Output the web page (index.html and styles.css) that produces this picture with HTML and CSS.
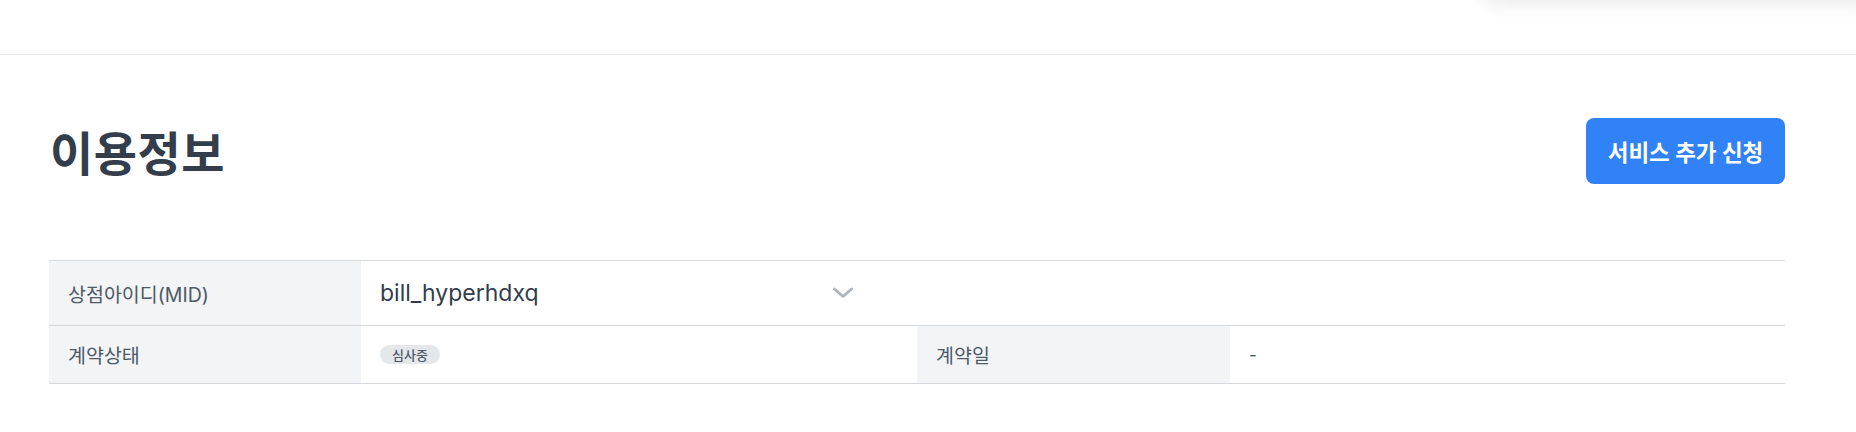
FILE: index.html
```html
<!DOCTYPE html>
<html lang="ko">
<head>
<meta charset="utf-8">
<title>이용정보</title>
<link rel="stylesheet" href="styles.css">
</head>
<body>
<div class="topbar">
  <div class="menu-shadow"></div>
</div>
<main class="content">
  <div class="title-row">
    <h1 class="title">이용정보</h1>
    <button class="btn-primary" type="button">서비스 추가 신청</button>
  </div>
  <div class="info-table">
    <div class="cell label">상점아이디(MID)</div>
    <div class="cell value span3">
      <div class="select">
        <span class="select-text">bill_hyperhdxq</span>
        <svg class="chevron" width="22" height="12" viewBox="0 0 22 12" fill="none"><path d="M2.5 2 L11 9.5 L19.5 2" stroke="#adb5bd" stroke-width="3" stroke-linecap="round" stroke-linejoin="round"/></svg>
      </div>
    </div>
    <div class="cell label short">계약상태</div>
    <div class="cell value short"><span class="badge">심사중</span></div>
    <div class="cell label short">계약일</div>
    <div class="cell value short"><span class="dash">-</span></div>
  </div>
</main>
</body>
</html>
```

FILE: styles.css
```css
* { box-sizing: border-box; }
html, body { margin: 0; padding: 0; background: #ffffff; }
body {
  font-family: Inter, "Noto Sans CJK KR", sans-serif;
  color: #333d4b;
  width: 1856px;
  height: 432px;
  overflow: hidden;
}
.topbar {
  position: relative;
  height: 55px;
  border-bottom: 1px solid #e5e5e5;
}
.menu-shadow {
  position: absolute;
  top: -60px;
  left: 1480px;
  right: -20px;
  height: 60px;
  background: #ffffff;
  border-radius: 0 0 16px 16px;
  box-shadow: 0 4px 18px rgba(0, 0, 0, 0.09);
}
.content {
  padding: 63px 71px 0 49px;
}
.title-row {
  display: flex;
  align-items: center;
  justify-content: space-between;
  height: 66px;
}
.title {
  margin: 0;
  font-size: 47px;
  font-weight: 700;
  letter-spacing: 0.5px;
  color: #333d4b;
  line-height: 1;
  padding-left: 1px;
  padding-top: 4px;
}
.btn-primary {
  width: 199px;
  height: 66px;
  border: none;
  border-radius: 8px;
  background: #3182f6;
  color: #ffffff;
  font-family: Inter, "Noto Sans CJK KR", sans-serif;
  font-size: 22.5px;
  font-weight: 700;
  padding: 0;
}
.info-table {
  margin-top: 76px;
  display: grid;
  grid-template-columns: 312px 556px 313px 1fr;
  border-top: 1px solid #d5d8dc;
}
.cell {
  display: flex;
  align-items: center;
  height: 65px;
  border-bottom: 1px solid #d5d8dc;
  padding-left: 19px;
}
.cell.short { height: 58px; }
.label {
  background: #f2f4f6;
  color: #4e5968;
  font-size: 19.5px;
}
.value { background: #ffffff; }
.span3 { grid-column: span 3; }
.select {
  width: 474px;
  display: flex;
  align-items: center;
  justify-content: space-between;
}
.select-text {
  font-size: 23px;
  color: #333d4b;
}
.chevron { display: block; }
.badge {
  display: inline-flex;
  align-items: center;
  justify-content: center;
  width: 60px;
  height: 19px;
  border-radius: 10px;
  background: #e5e8eb;
  color: #4e5968;
  font-size: 13px;
  font-weight: 500;
}
.dash {
  font-size: 17px;
  color: #4e5968;
}
```
